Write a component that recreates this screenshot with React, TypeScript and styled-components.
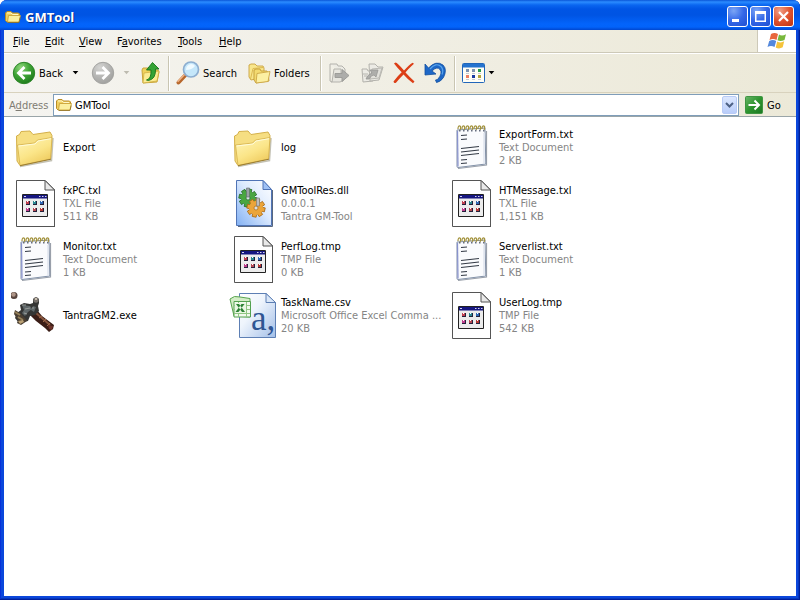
import React from 'react';
import styled, { createGlobalStyle } from 'styled-components';

const GlobalStyle = createGlobalStyle`
  * { box-sizing: border-box; }
  body { margin: 0; background: #fff; }
  button, input { font: inherit; color: inherit; }
  svg { display: block; flex: none; }
`;

const Desktop = styled.div`
  height: 100vh;
  padding: 0 1px 1px 0;
  font: 11px/13px Tahoma, "DejaVu Sans Condensed", sans-serif;
  color: #000;
`;

const Window = styled.main`
  height: 100%;
  display: flex;
  flex-direction: column;
  padding: 0 4px 4px;
  border-radius: 7px 7px 0 0;
  background: #0b47dc;
  box-shadow: inset -1px -1px #001f9c, inset 1px 0 #0831d9, inset -2px -2px #0638bd;
  overflow: hidden;
`;

const TitleBar = styled.header`
  height: 30px;
  flex: none;
  display: flex;
  align-items: center;
  gap: 4px;
  margin: 0 -4px;
  padding: 3px 6px 0 5px;
  background: linear-gradient(#0a56d8 0, #2b8cff 2px, #0a66f0 5px, #0055e5 9px, #0054e3 15px, #0364fb 24px, #0263fa 27px, #0046cf 30px);
`;

const Title = styled.h1`
  flex: 1;
  margin: 0;
  font: bold 13px/18px "Trebuchet MS", "Open Sans", sans-serif;
  color: #fff;
  text-shadow: 1px 1px #0a2a80;
`;

const Captions = styled.div`
  display: flex;
  gap: 2px;
`;

const CaptionButton = styled.button<{ $close?: boolean }>`
  width: 21px;
  height: 21px;
  padding: 0;
  border: 1px solid #fff;
  border-radius: 3px;
  background: ${p => p.$close
    ? 'radial-gradient(circle at 30% 20%, #f0a088, #e0532e 50%, #bd3210)'
    : 'radial-gradient(circle at 30% 20%, #7ba5f5, #3468e8 50%, #1f4fd0)'};
`;

const Band = styled.div`
  flex: none;
  display: flex;
  background: linear-gradient(90deg, #f5f4f0, #ece9d8);
`;

const MenuBar = styled(Band)`
  height: 23px;
  align-items: stretch;
  padding-left: 1px;
  border-bottom: 1px solid #cdc9b8;
`;

const MenuList = styled.nav`
  flex: 1;
  display: flex;
`;

const MenuItem = styled.button<{ $width: number }>`
  width: ${p => p.$width}px;
  padding: 0 8px;
  border: 0;
  background: none;
  text-align: left;
  white-space: nowrap;
`;

const Throbber = styled.div`
  width: 39px;
  display: grid;
  place-items: center;
  background: #fff;
  border-left: 1px solid #cdc9b8;
`;

const ToolBar = styled(Band)`
  height: 40px;
  align-items: center;
  padding-left: 8px;
  border-top: 1px solid #fff;
  border-bottom: 1px solid #d8d2bd;
`;

const Tool = styled.button<{ $width: number }>`
  width: ${p => p.$width}px;
  height: 34px;
  display: flex;
  align-items: center;
  gap: 3px;
  padding: 0;
  border: 0;
  background: none;
  white-space: nowrap;
`;

const ToolLabel = styled.span`
  flex: 1;
  text-align: left;
`;

const Separator = styled.div`
  width: 2px;
  height: 35px;
  margin-right: 6px;
  background: #c9c5b2;
  border-right: 1px solid #fff;
`;

const AddressBar = styled(Band)`
  height: 24px;
  align-items: center;
  padding: 1px 0 0 5px;
  border-bottom: 1px solid #9aa5a8;
`;

const AddressLabel = styled.label`
  width: 44px;
  color: #7f7c73;
  white-space: nowrap;
`;

const AddressField = styled.div`
  flex: 1;
  height: 22px;
  display: flex;
  align-items: center;
  padding: 0 1px 0 2px;
  border: 1px solid #7f9db9;
  background: #fff;
`;

const AddressInput = styled.input`
  flex: 1;
  min-width: 0;
  height: 18px;
  padding: 0 0 0 3px;
  border: 0;
  outline: 0;
  background: none;
`;

const DropButton = styled.button`
  width: 15px;
  height: 18px;
  display: grid;
  place-items: center;
  padding: 0;
  border: 1px solid #b8cbf6;
  border-radius: 2px;
  background: linear-gradient(#dce7fe, #b9cdfa);
`;

const GoButton = styled.button`
  width: 57px;
  display: flex;
  align-items: center;
  gap: 4px;
  padding: 0 0 0 6px;
  border: 0;
  background: none;
`;

const Files = styled.ul`
  flex: 1;
  min-height: 0;
  overflow: auto;
  display: grid;
  grid-template-columns: repeat(auto-fill, 218px);
  grid-auto-rows: 56px;
  align-content: start;
  margin: 0;
  padding: 2px 0 0 7px;
  list-style: none;
  background: #fff;
`;

const FileTile = styled.button`
  width: 100%;
  height: 100%;
  display: flex;
  align-items: center;
  gap: 4px;
  padding: 0;
  border: 0;
  background: none;
  text-align: left;
`;

const FileText = styled.span`
  display: grid;
  white-space: nowrap;
`;

const Detail = styled.span`
  color: #858585;
`;

const Caret = ({ color = '#000' }: { color?: string }) => (
  <svg width="7" height="4" viewBox="0 0 7 4"><path d="M.7 0h5.600L3.500 3.200z" fill={color} /></svg>
);

const SmallFolder = () => (
  <svg width="16" height="16" viewBox="0 0 16 16">
    <path d="M.5 4L2 2.500h4L7.500 4h6l1 1v6.500L13 13H2L.5 11.500z" fill="#f0cf60" stroke="#b88d28" />
    <path d="M2.500 13l1-6.500h12l-1.500 6.500z" fill="#fbf0a0" stroke="#c79c30" strokeWidth=".8" />
    <path d="M2 4h4l1.500 1.500h5.500" fill="none" stroke="#fff8c6" />
    <path d="M3 13.500h11l1.200-5" fill="none" stroke="#8a6a1c" strokeWidth=".7" />
  </svg>
);

const MinimizeGlyph = () => <svg width="19" height="19"><path d="M4 12h7v3H4z" fill="#fff" /></svg>;
const MaximizeGlyph = () => <svg width="19" height="19"><path d="M4 4h11v11H4zM5.500 7v6.500h8V7z" fill="#fff" fillRule="evenodd" /></svg>;
const CloseGlyph = () => <svg width="19" height="19"><path d="M5 5l9 9M14 5l-9 9" stroke="#fff" strokeWidth="2.200" /></svg>;

const Flag = () => (
  <svg width="20" height="20" viewBox="0 0 20 20">
    <path d="M4 3q3.500-2.200 7 0L9.500 9q-3.500-1.800-7 0z" fill="#e8663c" />
    <path d="M12 3.500q3 2 7-.3L17.500 9q-4 2-7 .3z" fill="#78b83c" />
    <path d="M2.200 10q3.500-2 7 0L7.500 16q-3.500-2-7 0z" fill="#5488dc" />
    <path d="M10.200 10.500q3.500 2 7-.2l-1.500 6q-3.500 2.200-7 .2z" fill="#f5c33b" />
  </svg>
);

const RoundArrow = ({ forward }: { forward?: boolean }) => (
  <svg width="24" height="24" viewBox="0 0 24 24">
    <defs>
      <radialGradient id={forward ? 'fwd' : 'back'} cx=".35" cy=".25" r=".8">
        <stop offset="0" stopColor={forward ? '#d4d4d2' : '#8fd67c'} />
        <stop offset=".5" stopColor={forward ? '#b8b8b6' : '#3fa536'} />
        <stop offset="1" stopColor={forward ? '#a0a09e' : '#1d7a1b'} />
      </radialGradient>
    </defs>
    <circle cx="12" cy="12" r="10.700" fill={`url(#${forward ? 'fwd' : 'back'})`} stroke={forward ? '#a3a3a0' : '#2b8427'} />
    <path d={forward ? 'M5 12H17M11.500 6l6 6-6 6' : 'M19 12H7M12.500 6l-6 6 6 6'} fill="none" stroke="#fff" strokeWidth="2.800" />
  </svg>
);

const UpIcon = () => (
  <svg width="22" height="24" viewBox="0 0 22 24">
    <path d="M2 9l1-2h5l1 2h9l1 2-2 10-14 1z" fill="#f0d25c" stroke="#c9a43a" />
    <path d="M4 12l15-2-2 10-14 2z" fill="#fbec93" stroke="#d1ae42" strokeWidth=".8" />
    <path d="M6.500 19q5-1 4.500-10H6.500l6-7.500L19 8h-3.500q.5 10-7 11.500z" fill="#35a335" stroke="#16751a" strokeWidth=".9" />
  </svg>
);

const SearchIcon = () => (
  <svg width="24" height="24" viewBox="0 0 24 24">
    <path d="M9.500 14L2.500 21.500" stroke="#b7672c" strokeWidth="4" strokeLinecap="round" />
    <path d="M8.500 13.500L2 20.500" stroke="#eeb184" strokeWidth="1.500" strokeLinecap="round" />
    <circle cx="15" cy="8.500" r="7.500" fill="#c5e7fa" stroke="#8daed0" strokeWidth="1.700" />
    <path d="M10 9q0-5 5-6 3 0 4 2-3 4-9 4z" fill="#effaff" />
  </svg>
);

const FoldersIcon = () => (
  <svg width="23" height="24" viewBox="0 0 23 24">
    <path d="M1 4l2-1h4l2 2h6l1 2v9L3 19l-2-3z" fill="#f8e68c" stroke="#c9a240" strokeWidth=".9" />
    <path d="M2.500 18L5 7.500l10-1" fill="none" stroke="#dcb950" />
    <path d="M6 9l2-1h4l1 2h6l1 2 1 8-13 2-2-3z" fill="#f3da70" stroke="#c39b36" strokeWidth=".9" />
    <path d="M9 12.500l13-2-2 10-12 1.500z" fill="#fcf0a2" stroke="#cda745" strokeWidth=".9" />
  </svg>
);

const MoveIcon = () => (
  <svg width="22" height="24" viewBox="0 0 22 24">
    <path d="M2 3h7l1 2h4l3 3v4" fill="#ecebe4" stroke="#b3b2ac" />
    <path d="M2 3v17l2 1L6 8h7v4h3v7l-4 2H3" fill="#e7e6df" stroke="#b3b2ac" />
    <path d="M7 12.500h7V8.500l7 6-7 6V16.500H7z" fill="#adadaa" stroke="#989895" strokeWidth=".9" />
  </svg>
);

const CopyIcon = () => (
  <svg width="24" height="24" viewBox="0 0 24 24">
    <path d="M2 8h5l1 2h5v10l-10 1z" fill="#ecebe5" stroke="#b3b2ac" />
    <path d="M9 3h6l3 3h5l-4 13-9 1z" fill="#ecebe5" stroke="#b3b2ac" />
    <path d="M12 8l10-1-3 10-9 1z" fill="#e2e1db" stroke="#bab9b3" />
    <path d="M6 18q1-4 6-6l-2-3h8l-2 7-2-2q-3 0-5 4z" fill="#aeaeab" stroke="#989895" strokeWidth=".8" />
    <path d="M3 13h5M4 15h3" stroke="#b5b4ae" />
  </svg>
);

const DeleteIcon = () => (
  <svg width="24" height="24" viewBox="0 0 24 24">
    <path d="M2 2.500l1.500-1q2 .3 8.500 8Q17 4 20.500 1.700l1.500 1Q16 8 13.500 11.500q4.500 5 9 9l-1.500 1.700q-6-4.500-9.500-8.700Q7 18 4 21.800q-2 1-2.500-1.300Q5.500 15 9.700 11.200 5 6.500 2 2.500z" fill="#dc3e16" />
  </svg>
);

const UndoIcon = () => (
  <svg width="22" height="24" viewBox="0 0 22 24">
    <path d="M1 3v11l11-1-4-3q5-5 8-1.500 3 4-2.500 10l-2 .5 1 2.500q4-.5 7-5 4-8-.5-12.500Q12-1 4.500 7z" fill="#1d67c7" stroke="#134f9e" strokeWidth=".8" />
    <path d="M6 8q6-7 11-2.500 3 3.500 1 8" fill="none" stroke="#5ba6ec" strokeWidth="1.200" />
  </svg>
);

const ViewsIcon = () => (
  <svg width="23" height="20" viewBox="0 0 23 20">
    <rect x=".5" y=".5" width="22" height="19" rx="1" fill="#fffef5" stroke="#2166ba" />
    <path d="M1 1h21v3.500H1z" fill="#2473cf" />
    <path d="M4 6h3v3H4zM10 6h3v3h-3z" fill="#7d93b0" /><path d="M16 6h3v3h-3z" fill="#279b4c" />
    <path d="M4 12h3v3H4z" fill="#ed8063" /><path d="M10 12h3v3h-3z" fill="#183aa0" /><path d="M16 12h3v3h-3z" fill="#b4a33d" />
    <path d="M4 10.500h3M10 10.500h3M16 10.500h3M4 16.500h3M10 16.500h3M16 16.500h3" stroke="#c5cbd3" />
  </svg>
);

const GoIcon = () => (
  <svg width="18" height="18" viewBox="0 0 18 18">
    <defs><linearGradient id="go" x2="1" y2="1"><stop stopColor="#69b568" /><stop offset=".5" stopColor="#2d942f" /><stop offset="1" stopColor="#1c7823" /></linearGradient></defs>
    <rect x=".5" y=".5" width="17" height="17" rx="1" fill="url(#go)" stroke="#3f9542" />
    <path d="M3.500 9H14M9.500 4.500L14 9l-4.500 4.500" fill="none" stroke="#fff" strokeWidth="2" />
  </svg>
);

const FolderIcon = () => (
  <svg width="48" height="48" viewBox="0 0 48 48">
    <defs><linearGradient id="folder" x2=".6" y2="1"><stop stopColor="#fff6bd" /><stop offset=".6" stopColor="#fbe588" /><stop offset="1" stopColor="#efcc60" /></linearGradient></defs>
    <path d="M9 43.500l31.500-6L42 15" fill="none" stroke="#aaa694" strokeWidth="1.500" opacity=".7" />
    <path d="M5.500 13l3-1.500 1.500-3 9-.5 3 3.500 17-2.500 2 3.500-1.500 23L9 42.500 6 38z" fill="#f6de82" stroke="#d4b04a" />
    <path d="M6.500 22l17-2 3-3L41 14.500 39.500 36 9 42.500z" fill="url(#folder)" stroke="#d8b650" strokeWidth=".9" />
    <path d="M7.500 23l16.500-2 3-3 13-2.300" fill="none" stroke="#fffbd9" />
    <path d="M9 42.700l31-6.500" stroke="#9a7d33" />
  </svg>
);

const NotepadIcon = () => (
  <svg width="48" height="48" viewBox="0 0 48 48">
    <path d="M11 45.500l28.500-3.500V8" fill="none" stroke="#9aa0aa" strokeWidth="1.200" />
    <path d="M10 7l28-2 .8 36L11 44.500q-1 0-1-1z" fill="#fafbfd" stroke="#8291a8" />
    <path d="M10.500 8l.5 35.500" stroke="#8690cc" strokeWidth="1.200" />
    <path d="M37 10v31" stroke="#dfe5ee" strokeWidth="1.500" />
    {[12, 16, 20, 24, 28, 32, 36].map(x => (
      <g key={x}>
        <path d={`M${x - 1} 6q0-3.500 2-3 1.500 1 0 4`} fill="none" stroke="#a3923c" strokeWidth="1.200" />
        <path d={`M${x} 7h1.500v1.500H${x}z`} fill="#666e80" />
      </g>
    ))}
    <path d="M14 12.500l6-.5M14 16.500l6-.5M14 25.500l18-2M14 29l18-2M14 32.500l18-2M14 37l6-.5M14 40.500l6-.5" stroke="#333a45" strokeWidth="1.200" />
  </svg>
);

const iconDots = ['#c04050', '#2a8790', '#3069b5', '#bf3f8d', '#b54852', '#b83a35'];

const UnknownFileIcon = () => (
  <svg width="48" height="48" viewBox="0 0 48 48">
    <path d="M5.500 1.500H34l9.500 9.500v37M5.500 1.500v46h38V11L34 1.500" fill="#fff" stroke="#555" />
    <path d="M34 1.500V11h9.500z" fill="#e9e9e9" stroke="#555" />
    <path d="M11.500 15.500h25v22h-25z" fill="#ececec" stroke="#222" />
    <path d="M12 16h24v3.500H12z" fill="#161680" />
    <path d="M13 17.500h2M28 17.500h1.500M31 17.500h1.500M34 17.500h1.500" stroke="#d5d5ec" />
    {iconDots.map((color, i) => {
      const x = 15 + (i % 3) * 7;
      const y = 22 + Math.floor(i / 3) * 7;
      return (
        <g key={i}>
          <path d={`M${x} ${y}h4v4h-4z`} fill="#24213b" />
          <path d={`M${x} ${y}h3v3h-3z`} fill={color} />
          <path d={`M${x + 1} ${y}h1v1h-1z`} fill="#fff" />
        </g>
      );
    })}
  </svg>
);

const Gear = ({ x, y, fill, stroke }: { x: number; y: number; fill: string; stroke: string }) => (
  <g transform={`translate(${x} ${y})`}>
    {[0, 45, 90, 135, 180, 225, 270, 315].map(a => (
      <path key={a} d="M-2-9h4v5h-4z" transform={`rotate(${a + 12})`} fill={fill} stroke={stroke} strokeWidth=".8" />
    ))}
    <circle r="7" fill={fill} />
    <circle r="2" fill="#d9dfe5" stroke={stroke} strokeWidth=".7" />
  </g>
);

const LibraryIcon = () => (
  <svg width="48" height="48" viewBox="0 0 48 48">
    <defs><linearGradient id="lib" x1="1" x2="0" y2="1"><stop stopColor="#fff" /><stop offset=".45" stopColor="#dceafe" /><stop offset="1" stopColor="#83b1f3" /></linearGradient></defs>
    <path d="M9 47.500h34.500V11" fill="none" stroke="#59687f" />
    <path d="M7.500 1.500H34l8.500 9v36h-35z" fill="url(#lib)" stroke="#5074b6" />
    <path d="M34 1.500v9h8.500z" fill="#9fc1f5" stroke="#5074b6" />
    <Gear x={19} y={19} fill="#49a642" stroke="#276d29" />
    <path d="M17.500 9h3v9h-3z" fill="#9ba1a5" stroke="#5f686f" strokeWidth=".6" />
    <Gear x={27} y={29} fill="#eba53a" stroke="#a96a17" />
    <path d="M27.500 19h3v8h-3z" fill="#bbbcc0" stroke="#70706e" strokeWidth=".6" />
  </svg>
);

const CsvIcon = () => (
  <svg width="48" height="48" viewBox="0 0 48 48">
    <defs><linearGradient id="csv" x2="1" y2="1"><stop stopColor="#fff" /><stop offset=".4" stopColor="#eef4fc" /><stop offset="1" stopColor="#a3bfe8" /></linearGradient></defs>
    <path d="M10.500 2.500H37l9.500 9v35h-36z" fill="url(#csv)" stroke="#5d7fb4" />
    <path d="M37 2.500v9h9.500z" fill="#dae7f8" stroke="#5d7fb4" />
    <text x="22" y="39" fontFamily="Liberation Serif, serif" fontSize="35" fill="#2f5593">a,</text>
    <path d="M1 8q4-4 10-2l10 1.500V26L5 25z" fill="#d3edc6" stroke="#58a44e" />
    <path d="M5 10.500h16.500V26H5z" fill="#f2faee" stroke="#54a150" />
    <path d="M5 14.500h16M5 18.500h16M5 22.500h16M17.500 11v15M9.500 11v15" stroke="#91c784" />
    <path d="M6 12h11v10H6z" fill="#eaf7e3" />
    <path d="M7 13h3l6 8h-3zM15.500 13h-3l-6 8h3z" fill="#2c8234" />
  </svg>
);

const HammerIcon = () => (
  <svg width="48" height="48" viewBox="0 0 48 48">
    <circle cx="3" cy="4.500" r="3.500" fill="#57443e" /><circle cx="2.500" cy="3.500" r="2.200" fill="#ae9588" />
    <path d="M22 20l4-1 5 6 12 9-1 4-4 3-4-4-9-7-6-6z" fill="#3a1d16" />
    <path d="M25 22l14 12" stroke="#85543d" strokeWidth="2" />
    <path d="M28 27l3-2M32 31l3-3M36 35l3-3" stroke="#9c6748" />
    <path d="M37 34l5 1-1 4-3-1z" fill="#6e342b" />
    <path d="M9 14l4-2 6 1 3-1v-4l3-2 3 2v4l-1 3 1 5-4 4-5 1-2 5-5 1-4 1-4-5 2-5 4-3z" fill="#343534" />
    <path d="M11 14l8 1 2 3-4 3-3 4-3-3 2-3zM22 15l3 1-2 5-3-2z" fill="#5f6769" />
    <path d="M11 14h4M14 18l5-1M21 17h2M13 22l3 1" stroke="#969b98" strokeWidth="1.200" />
    <circle cx="25" cy="9" r="2.700" fill="#77716c" /><path d="M24 7h2v2h-2z" fill="#c7bdad" />
    <path d="M4 19l5 3 5 5 2 3-3 2-3 2-4-2 1-3-4-6z" fill="#4a3e31" />
    <path d="M4 21l5 3M7 26l5 3" stroke="#958059" strokeWidth="2" />
    <path d="M7 30l5-1 1 2-4 2z" fill="#bba276" />
  </svg>
);

const icons = {
  folder: FolderIcon,
  text: NotepadIcon,
  unknown: UnknownFileIcon,
  library: LibraryIcon,
  csv: CsvIcon,
  hammer: HammerIcon,
};

const files: { name: string; icon: keyof typeof icons; details?: string[] }[] = [
  { name: 'Export', icon: 'folder' },
  { name: 'log', icon: 'folder' },
  { name: 'ExportForm.txt', icon: 'text', details: ['Text Document', '2 KB'] },
  { name: 'fxPC.txl', icon: 'unknown', details: ['TXL File', '511 KB'] },
  { name: 'GMToolRes.dll', icon: 'library', details: ['0.0.0.1', 'Tantra GM-Tool'] },
  { name: 'HTMessage.txl', icon: 'unknown', details: ['TXL File', '1,151 KB'] },
  { name: 'Monitor.txt', icon: 'text', details: ['Text Document', '1 KB'] },
  { name: 'PerfLog.tmp', icon: 'unknown', details: ['TMP File', '0 KB'] },
  { name: 'Serverlist.txt', icon: 'text', details: ['Text Document', '1 KB'] },
  { name: 'TantraGM2.exe', icon: 'hammer' },
  { name: 'TaskName.csv', icon: 'csv', details: ['Microsoft Office Excel Comma ...', '20 KB'] },
  { name: 'UserLog.tmp', icon: 'unknown', details: ['TMP File', '542 KB'] },
];

const menus = [
  { before: '', key: 'F', after: 'ile', width: 32 },
  { before: '', key: 'E', after: 'dit', width: 34 },
  { before: '', key: 'V', after: 'iew', width: 38 },
  { before: 'F', key: 'a', after: 'vorites', width: 61 },
  { before: '', key: 'T', after: 'ools', width: 41 },
  { before: '', key: 'H', after: 'elp', width: 40 },
];

export default function App() {
  return (
    <Desktop>
      <GlobalStyle />
      <Window>
        <TitleBar>
          <SmallFolder />
          <Title>GMTool</Title>
          <Captions>
            <CaptionButton aria-label="Minimize"><MinimizeGlyph /></CaptionButton>
            <CaptionButton aria-label="Maximize"><MaximizeGlyph /></CaptionButton>
            <CaptionButton aria-label="Close" $close><CloseGlyph /></CaptionButton>
          </Captions>
        </TitleBar>
        <MenuBar>
          <MenuList>
            {menus.map(m => (
              <MenuItem key={m.key} $width={m.width}>{m.before}<u>{m.key}</u>{m.after}</MenuItem>
            ))}
          </MenuList>
          <Throbber><Flag /></Throbber>
        </MenuBar>
        <ToolBar>
          <Tool $width={60}><RoundArrow /><ToolLabel>Back</ToolLabel></Tool>
          <Tool $width={19} aria-label="Back history"><Caret /></Tool>
          <Tool $width={32} aria-label="Forward"><RoundArrow forward /></Tool>
          <Tool $width={17} aria-label="Forward history"><Caret color="#bdbbb0" /></Tool>
          <Tool $width={28} aria-label="Up"><UpIcon /></Tool>
          <Separator />
          <Tool $width={72}><SearchIcon /><ToolLabel>Search</ToolLabel></Tool>
          <Tool $width={72}><FoldersIcon /><ToolLabel>Folders</ToolLabel></Tool>
          <Separator />
          <Tool $width={32} aria-label="Move to"><MoveIcon /></Tool>
          <Tool $width={32} aria-label="Copy to"><CopyIcon /></Tool>
          <Tool $width={32} aria-label="Delete"><DeleteIcon /></Tool>
          <Tool $width={30} aria-label="Undo"><UndoIcon /></Tool>
          <Separator />
          <Tool $width={34} aria-label="Views"><ViewsIcon /><Caret /></Tool>
        </ToolBar>
        <AddressBar>
          <AddressLabel htmlFor="address">A<u>d</u>dress</AddressLabel>
          <AddressField>
            <SmallFolder />
            <AddressInput id="address" defaultValue="GMTool" />
            <DropButton aria-label="Show addresses">
              <svg width="9" height="7"><path d="M1 1l3.500 3.500L8 1" fill="none" stroke="#4d6185" strokeWidth="2" /></svg>
            </DropButton>
          </AddressField>
          <GoButton><GoIcon />Go</GoButton>
        </AddressBar>
        <Files>
          {files.map(f => {
            const Icon = icons[f.icon];
            return (
              <li key={f.name}>
                <FileTile>
                  <Icon />
                  <FileText>
                    <span>{f.name}</span>
                    {f.details?.map(d => <Detail key={d}>{d}</Detail>)}
                  </FileText>
                </FileTile>
              </li>
            );
          })}
        </Files>
      </Window>
    </Desktop>
  );
}
